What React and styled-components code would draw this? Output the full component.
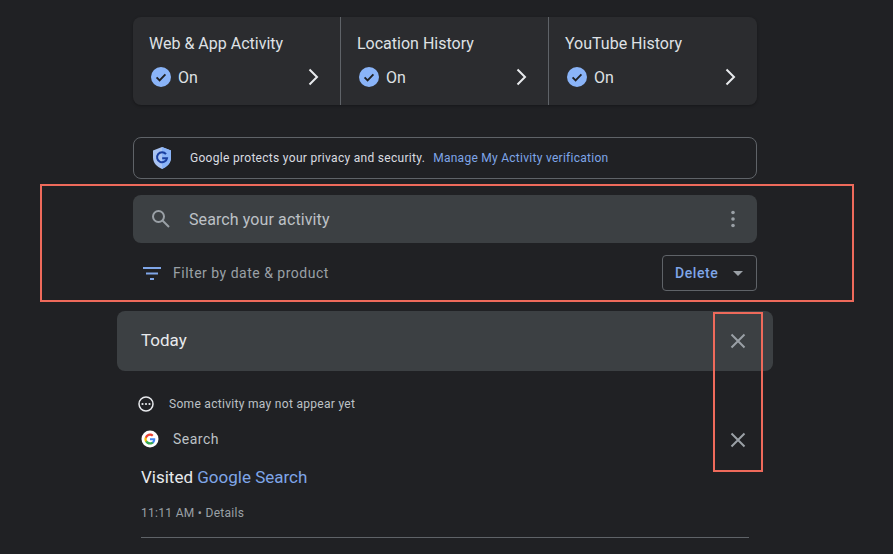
import React from "react";
import styled, { createGlobalStyle } from "styled-components";

const Global = createGlobalStyle`
  html, body { margin: 0; padding: 0; background: #202124; overflow: hidden; }
  body { font-family: Roboto, "Liberation Sans", sans-serif; }
`;

const Page = styled.div`
  position: relative;
  width: 893px;
  height: 554px;
  padding-top: 17px;
  box-sizing: border-box;
  background: #202124;
  overflow: hidden;
`;

const Column = styled.div`
  width: 624px;
  margin-left: 133px;
`;

const Cards = styled.div`
  display: grid;
  grid-template-columns: 208px 208px 208px;
  height: 88px;
  border-radius: 8px;
  background: #2b2c2f;
  box-shadow: 0 1px 3px rgba(0, 0, 0, 0.3);
  overflow: hidden;
`;

const Card = styled.div`
  box-sizing: border-box;
  padding: 17px 16px 0 16px;
  border-right: ${(p) => (p.$last ? "none" : "1px solid #5f6368")};
`;

const CardTitle = styled.div`
  font-size: 16px;
  line-height: 20px;
  color: #dfe1e5;
`;

const CardStatus = styled.div`
  display: flex;
  align-items: center;
  margin-top: 13px;
  height: 20px;
  padding-left: 2px;
  padding-right: 4px;
  font-size: 16px;
  color: #dfe1e5;
`;

const StatusText = styled.span`
  margin-left: 7px;
  flex: 1;
`;

const Notice = styled.div`
  display: flex;
  align-items: center;
  box-sizing: border-box;
  height: 42px;
  margin-top: 32px;
  padding-left: 18px;
  border: 1px solid #5f6368;
  border-radius: 8px;
  font-size: 12px;
  letter-spacing: 0.3px;
  color: #dadce0;
`;

const NoticeText = styled.span`
  margin-left: 18px;
`;

const NoticeLink = styled.span`
  margin-left: 8px;
  letter-spacing: 0.27px;
  color: #7fa6e8;
`;

const SearchBar = styled.div`
  display: flex;
  align-items: center;
  height: 48px;
  margin-top: 16px;
  padding: 0 21px 0 16px;
  border-radius: 8px;
  background: #3c4043;
`;

const SearchText = styled.span`
  flex: 1;
  margin-left: 16px;
  font-size: 16px;
  letter-spacing: 0.1px;
  color: #bdc1c6;
`;

const FilterRow = styled.div`
  display: flex;
  align-items: center;
  height: 36px;
  margin-top: 12px;
  padding-left: 9px;
`;

const FilterText = styled.span`
  flex: 1;
  margin-left: 11px;
  font-size: 14px;
  letter-spacing: 0.5px;
  color: #9aa0a6;
`;

const DeleteButton = styled.div`
  display: flex;
  align-items: center;
  box-sizing: border-box;
  width: 95px;
  height: 36px;
  padding-left: 12px;
  border: 1px solid #5f6368;
  border-radius: 4px;
  font-size: 14px;
  font-weight: 500;
  letter-spacing: 0.6px;
  color: #7fa6e8;
`;

const Caret = styled.span`
  width: 0;
  height: 0;
  margin-left: 15px;
  border-left: 5px solid transparent;
  border-right: 5px solid transparent;
  border-top: 5px solid #9aa0a6;
`;

const DayHeader = styled.div`
  display: flex;
  align-items: center;
  justify-content: space-between;
  width: 656px;
  height: 60px;
  margin: 20px 0 0 117px;
  padding: 0 27px 0 24px;
  box-sizing: border-box;
  border-radius: 8px;
  background: #3c4043;
  font-size: 17px;
  color: #e8eaed;
`;

const DayTitle = styled.span`
  margin-bottom: 2px;
`;

const Activity = styled.div`
  width: 608px;
  margin-left: 141px;
`;

const Pending = styled.div`
  display: flex;
  align-items: center;
  height: 20px;
  margin-top: 23px;
  margin-left: -4px;
  font-size: 12px;
  letter-spacing: 0.3px;
  color: #bdc1c6;
`;

const PendingText = styled.span`
  margin-left: 14px;
`;

const SourceRow = styled.div`
  display: flex;
  align-items: center;
  justify-content: space-between;
  height: 24px;
  margin-top: 13px;
  padding-right: 3px;
`;

const SourceLabel = styled.div`
  display: flex;
  align-items: center;
  font-size: 14px;
  letter-spacing: 0.5px;
  color: #bdc1c6;
`;

const SourceText = styled.span`
  margin-left: 14px;
`;

const RowClose = styled.span`
  display: flex;
  margin-top: 2px;
`;

const Visited = styled.div`
  margin-top: 15px;
  font-size: 17px;
  line-height: 22px;
  color: #e8eaed;
`;

const VisitedLink = styled.span`
  color: #7fa6e8;
`;

const Meta = styled.div`
  margin-top: 17px;
  font-size: 12px;
  line-height: 16px;
  letter-spacing: 0.3px;
  color: #9aa0a6;
`;

const Rule = styled.div`
  height: 1px;
  margin-top: 16px;
  background: #5f6368;
`;

const Highlight = styled.div`
  position: absolute;
  box-sizing: border-box;
  left: ${(p) => p.$x}px;
  top: ${(p) => p.$y}px;
  width: ${(p) => p.$w}px;
  height: ${(p) => p.$h}px;
  border: 2px solid #ee6a5b;
  pointer-events: none;
`;

const CheckBadge = () => (
  <svg width="20" height="20" viewBox="0 0 20 20">
    <circle cx="10" cy="10" r="10" fill="#8ab4f8" />
    <path d="M5.6 10.3l3 3 5.8-6" fill="none" stroke="#202124" strokeWidth="1.9" />
  </svg>
);

const Chevron = () => (
  <svg width="12" height="18" viewBox="0 0 12 18">
    <path d="M1.500 1.500l7.500 7.500-7.500 7.500" fill="none" stroke="#e8eaed" strokeWidth="2" />
  </svg>
);

const Shield = () => (
  <svg width="20" height="24" viewBox="0 0 20 24">
    <path d="M10 1l9 3.4v7.2c0 5.2-3.8 9.6-9 11.4-5.2-1.8-9-6.2-9-11.4V4.400z" fill="#a9c3f2" />
    <path d="M10 1l9 3.4v7.2c0 5.200-3.800 9.600-9 11.400z" fill="#8ab4f8" />
    <path d="M14 8.200A5 5 0 1 0 15 12.200h-4.800" fill="none" stroke="#1a3fa0" strokeWidth="2" />
  </svg>
);

const SearchIcon = () => (
  <svg width="24" height="24" viewBox="0 0 24 24">
    <circle cx="9.500" cy="9.500" r="5.500" fill="none" stroke="#9aa0a6" strokeWidth="2" />
    <path d="M13.500 13.500l6.500 6.500" stroke="#9aa0a6" strokeWidth="2" />
  </svg>
);

const Dots = () => (
  <svg width="6" height="18" viewBox="0 0 6 18">
    <circle cx="3" cy="2.500" r="1.800" fill="#9aa0a6" />
    <circle cx="3" cy="9" r="1.800" fill="#9aa0a6" />
    <circle cx="3" cy="15.500" r="1.800" fill="#9aa0a6" />
  </svg>
);

const FilterIcon = () => (
  <svg width="20" height="14" viewBox="0 0 20 14">
    <path d="M1 2h18M4 7.500h12M8 13h4" stroke="#7fa6e8" strokeWidth="2" />
  </svg>
);

const CloseIcon = () => (
  <svg width="16" height="16" viewBox="0 0 16 16">
    <path d="M1.500 1.500l13 13M14.500 1.500l-13 13" stroke="#9aa0a6" strokeWidth="2" />
  </svg>
);

const PendingIcon = () => (
  <svg width="18" height="18" viewBox="0 0 18 18">
    <circle cx="9" cy="9" r="7" fill="none" stroke="#e8eaed" strokeWidth="1.500" />
    <circle cx="5.500" cy="9" r="1.100" fill="#e8eaed" />
    <circle cx="9" cy="9" r="1.100" fill="#e8eaed" />
    <circle cx="12.500" cy="9" r="1.100" fill="#e8eaed" />
  </svg>
);

const GoogleLogo = () => (
  <svg width="18" height="18" viewBox="0 0 18 18">
    <circle cx="9" cy="9" r="8.500" fill="#fff" />
    <g transform="translate(9 9) scale(1.25) translate(-9 -9)">
      <path d="M13.200 9.200c0-.3 0-.6-.1-.9H9v1.700h2.400c-.1.600-.4 1-.9 1.300v1.100h1.400c.8-.8 1.300-1.900 1.300-3.200z" fill="#4285f4" />
      <path d="M9 13.400c1.200 0 2.200-.4 2.900-1.100l-1.400-1.100c-.4.300-.9.400-1.500.4-1.200 0-2.100-.8-2.500-1.800H5v1.100c.7 1.500 2.200 2.500 4 2.500z" fill="#34a853" />
      <path d="M6.500 10.800c-.1-.3-.2-.6-.2-.9s.1-1.200.2-1.500V7.300H5c-.3.600-.5 1.100-.5 1.700s.2 1.500.5 2.100z" fill="#fbbc05" />
      <path d="M9 6.300c.6 0 1.200.2 1.600.6l1.200-1.200C11 5 10.100 4.600 9 4.600c-1.800 0-3.300 1-4 2.700l1.500 1.100C6.900 7.100 7.800 6.300 9 6.300z" fill="#ea4335" />
    </g>
  </svg>
);

const cards = ["Web & App Activity", "Location History", "YouTube History"];

export default function App() {
  return (
    <Page>
      <Global />
      <Column>
        <Cards>
          {cards.map((title, i) => (
            <Card key={title} $last={i === cards.length - 1}>
              <CardTitle>{title}</CardTitle>
              <CardStatus>
                <CheckBadge />
                <StatusText>On</StatusText>
                <Chevron />
              </CardStatus>
            </Card>
          ))}
        </Cards>
        <Notice>
          <Shield />
          <NoticeText>Google protects your privacy and security.</NoticeText>
          <NoticeLink>Manage My Activity verification</NoticeLink>
        </Notice>
        <SearchBar>
          <SearchIcon />
          <SearchText>Search your activity</SearchText>
          <Dots />
        </SearchBar>
        <FilterRow>
          <FilterIcon />
          <FilterText>Filter by date &amp; product</FilterText>
          <DeleteButton>
            Delete
            <Caret />
          </DeleteButton>
        </FilterRow>
      </Column>
      <DayHeader>
        <DayTitle>Today</DayTitle>
        <CloseIcon />
      </DayHeader>
      <Activity>
        <Pending>
          <PendingIcon />
          <PendingText>Some activity may not appear yet</PendingText>
        </Pending>
        <SourceRow>
          <SourceLabel>
            <GoogleLogo />
            <SourceText>Search</SourceText>
          </SourceLabel>
          <RowClose>
            <CloseIcon />
          </RowClose>
        </SourceRow>
        <Visited>
          Visited <VisitedLink>Google Search</VisitedLink>
        </Visited>
        <Meta>11:11 AM • Details</Meta>
        <Rule />
      </Activity>
      <Highlight $x={40} $y={184} $w={814} $h={118} />
      <Highlight $x={713} $y={312} $w={50} $h={160} />
    </Page>
  );
}
